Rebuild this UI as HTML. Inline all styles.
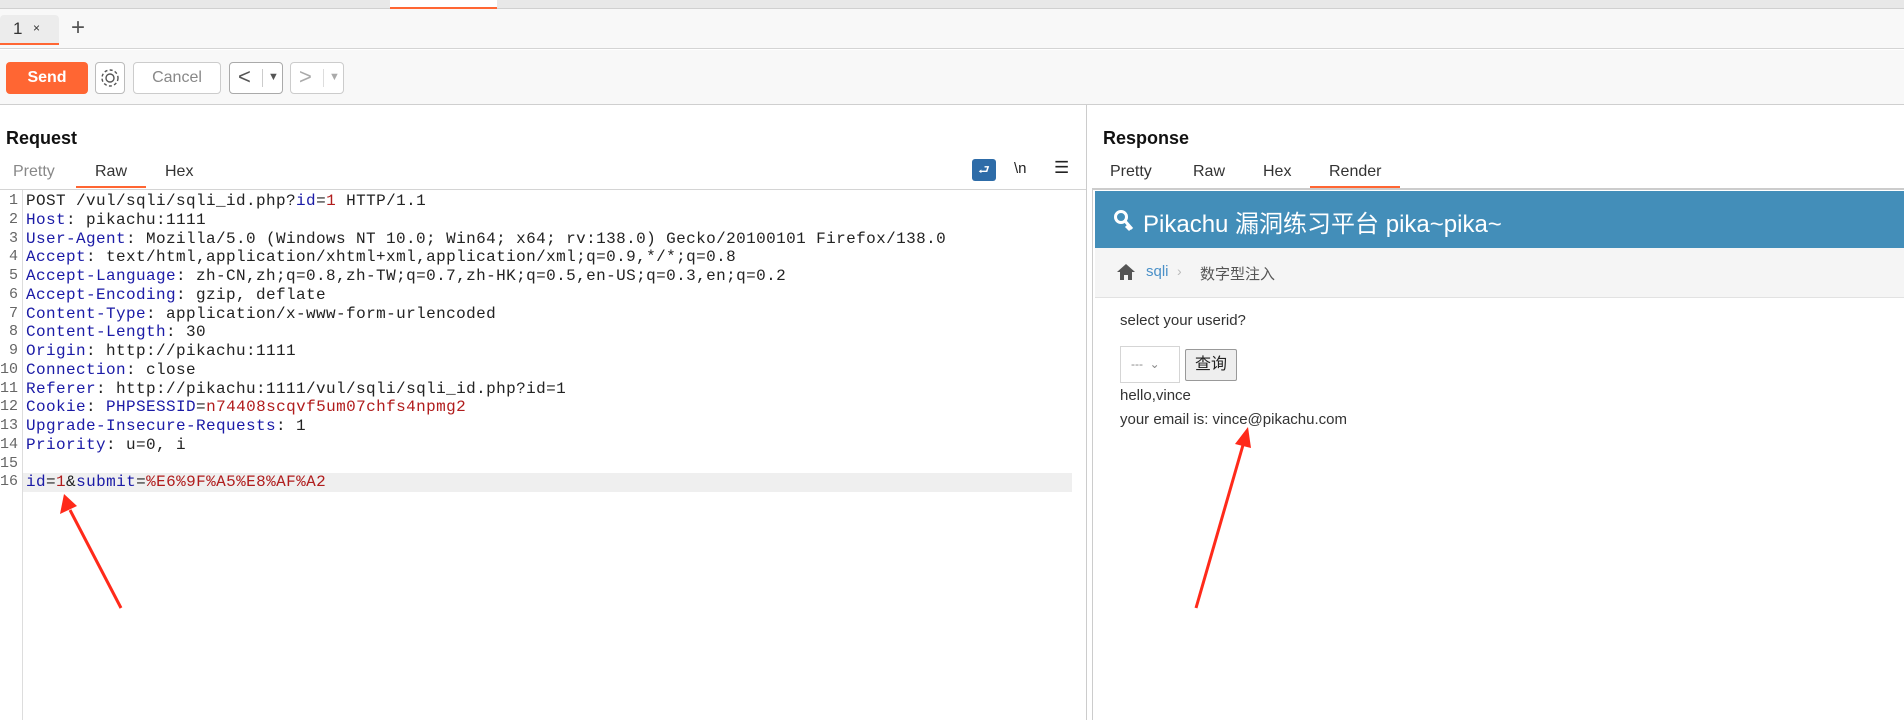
<!DOCTYPE html>
<html><head><meta charset="utf-8"><style>
*{margin:0;padding:0;box-sizing:border-box}
body{width:1904px;height:720px;overflow:hidden;background:#fff;font-family:"Liberation Sans","Noto Sans CJK SC",sans-serif;position:relative;color:#222}
.abs{position:absolute}
.code{font-family:"Liberation Mono","Noto Sans CJK SC",monospace;font-size:16px;letter-spacing:0.4px;white-space:pre;line-height:18.75px;color:#222}
.k{color:#1a1aa6}.v{color:#b01c1c}
.ln{position:absolute;left:0;width:18px;text-align:right;font-family:"Liberation Mono",monospace;font-size:15px;line-height:18.75px;color:#666}
.tab{position:absolute;font-size:16px;color:#333}
</style></head><body>
<div class="abs" style="left:0;top:0;width:1904px;height:9px;background:#e8e8e8;border-bottom:1px solid #d0d0d0"></div>
<div class="abs" style="left:390px;top:0;width:107px;height:9px;background:#fff;border-bottom:2px solid #ff6633"></div>
<div class="abs" style="left:0;top:9px;width:1904px;height:40px;background:#f8f8f8;border-bottom:1px solid #d4d4d4"></div>
<div class="abs" style="left:0;top:15px;width:59px;height:30px;background:#ececec;border-bottom:2px solid #ff6633;border-radius:4px 4px 0 0"></div>
<div class="abs" style="left:13px;top:19px;font-size:17px;color:#333">1</div>
<div class="abs" style="left:33px;top:21px;font-size:12px;color:#333">×</div>
<div class="abs" style="left:71px;top:14px;font-size:24px;color:#555;font-weight:300">+</div>
<div class="abs" style="left:0;top:50px;width:1904px;height:55px;background:#f8f8f8;border-bottom:1px solid #cfcfcf"></div>
<div class="abs" style="left:6px;top:62px;width:82px;height:32px;background:#ff6633;border-radius:4px;color:#fff;font-weight:bold;font-size:16px;text-align:center;line-height:32px">Send</div>
<div class="abs" style="left:95px;top:62px;width:30px;height:32px;border:1px solid #bbb;border-radius:4px;background:#fff">
<svg width="28" height="30" viewBox="0 0 28 30"><circle cx="14" cy="15" r="4" fill="none" stroke="#555" stroke-width="1.4"/><circle cx="14" cy="15" r="8" fill="none" stroke="#555" stroke-width="1.4" stroke-dasharray="3 2.3"/></svg></div>
<div class="abs" style="left:133px;top:62px;width:88px;height:32px;border:1px solid #ccc;border-radius:4px;background:#fff;color:#888;font-size:16px;text-align:center;line-height:30px">Cancel</div>
<div class="abs" style="left:229px;top:62px;width:54px;height:32px;border:1px solid #aaa;border-radius:4px;background:#fff;color:#555;font-size:22px;line-height:28px;padding-left:8px">&lt;<span style="position:absolute;left:32px;top:6px;height:18px;border-left:1px solid #ccc"></span><span style="position:absolute;left:38px;top:0;font-size:11px">▼</span></div>
<div class="abs" style="left:290px;top:62px;width:54px;height:32px;border:1px solid #ccc;border-radius:4px;background:#fff;color:#aaa;font-size:22px;line-height:28px;padding-left:8px">&gt;<span style="position:absolute;left:32px;top:6px;height:18px;border-left:1px solid #ddd"></span><span style="position:absolute;left:38px;top:0;font-size:11px">▼</span></div>
<div class="abs" style="left:6px;top:128px;font-size:18px;font-weight:bold;color:#111">Request</div>
<div class="tab" style="left:13px;top:163px;color:#888">Pretty</div>
<div class="tab" style="left:95px;top:163px">Raw</div>
<div class="abs" style="left:76px;top:186px;width:70px;height:2px;background:#ff6633"></div>
<div class="tab" style="left:165px;top:163px">Hex</div>
<div class="abs" style="left:972px;top:159px;width:24px;height:22px;background:#2e6ca8;border-radius:3px;color:#fff;font-size:13px;text-align:center;line-height:22px">⮐</div>
<div class="abs" style="left:1014px;top:160px;font-size:15px;color:#222">\n</div>
<div class="abs" style="left:1054px;top:158px;font-size:17px;color:#222">☰</div>
<div class="abs" style="left:0;top:189px;width:1086px;height:1px;background:#d4d4d4"></div>
<div class="abs" style="left:22px;top:190px;width:1px;height:530px;background:#ddd"></div>
<div class="abs" style="left:23px;top:473px;width:1049px;height:19px;background:#efefef"></div>
<div class="abs" style="left:0;top:192px;width:1086px">
<div class="ln" style="top:0">1</div><div class="ln" style="top:18.75px">2</div><div class="ln" style="top:37.5px">3</div><div class="ln" style="top:56.25px">4</div><div class="ln" style="top:75px">5</div><div class="ln" style="top:93.75px">6</div><div class="ln" style="top:112.5px">7</div><div class="ln" style="top:131.25px">8</div><div class="ln" style="top:150px">9</div><div class="ln" style="top:168.75px">10</div><div class="ln" style="top:187.5px">11</div><div class="ln" style="top:206.25px">12</div><div class="ln" style="top:225px">13</div><div class="ln" style="top:243.75px">14</div><div class="ln" style="top:262.5px">15</div><div class="ln" style="top:281.25px">16</div>
<div class="code abs" style="left:26px;top:0">POST /vul/sqli/sqli_id.php?<span class="k">id</span>=<span class="v">1</span> HTTP/1.1
<span class="k">Host</span>: pikachu:1111
<span class="k">User-Agent</span>: Mozilla/5.0 (Windows NT 10.0; Win64; x64; rv:138.0) Gecko/20100101 Firefox/138.0
<span class="k">Accept</span>: text/html,application/xhtml+xml,application/xml;q=0.9,*/*;q=0.8
<span class="k">Accept-Language</span>: zh-CN,zh;q=0.8,zh-TW;q=0.7,zh-HK;q=0.5,en-US;q=0.3,en;q=0.2
<span class="k">Accept-Encoding</span>: gzip, deflate
<span class="k">Content-Type</span>: application/x-www-form-urlencoded
<span class="k">Content-Length</span>: 30
<span class="k">Origin</span>: http://pikachu:1111
<span class="k">Connection</span>: close
<span class="k">Referer</span>: http://pikachu:1111/vul/sqli/sqli_id.php?id=1
<span class="k">Cookie</span>: <span class="k">PHPSESSID</span>=<span class="v">n74408scqvf5um07chfs4npmg2</span>
<span class="k">Upgrade-Insecure-Requests</span>: 1
<span class="k">Priority</span>: u=0, i

<span class="k">id</span>=<span class="v">1</span>&amp;<span class="k">submit</span>=<span class="v">%E6%9F%A5%E8%AF%A2</span></div>
</div>
<div class="abs" style="left:1086px;top:105px;width:1px;height:615px;background:#ccc"></div>
<div class="abs" style="left:1092px;top:189px;width:1px;height:531px;background:#ccc"></div>
<div class="abs" style="left:1103px;top:128px;font-size:18px;font-weight:bold;color:#111">Response</div>
<div class="tab" style="left:1110px;top:163px">Pretty</div>
<div class="tab" style="left:1193px;top:163px">Raw</div>
<div class="tab" style="left:1263px;top:163px">Hex</div>
<div class="tab" style="left:1329px;top:163px">Render</div>
<div class="abs" style="left:1310px;top:186px;width:90px;height:2px;background:#ff6633"></div>
<div class="abs" style="left:1092px;top:188px;width:812px;height:2px;background:#ccc"></div>
<div class="abs" style="left:1095px;top:191px;width:809px;height:57px;background:#438eb9"></div>
<div class="abs" style="left:1113px;top:206px;width:24px;height:30px"><svg width="22" height="28" viewBox="0 0 22 28"><circle cx="8" cy="11" r="5.5" fill="none" stroke="#fff" stroke-width="3"/><path d="M12 15l7 8M15 20l-2 2M17 22l-2 2" stroke="#fff" stroke-width="3"/></svg></div>
<div class="abs" style="left:1143px;top:204px;font-size:24px;color:#fff">Pikachu 漏洞练习平台 pika~pika~</div>
<div class="abs" style="left:1095px;top:248px;width:809px;height:50px;background:#f5f5f5;border-bottom:1px solid #e2e2e2"></div>
<div class="abs" style="left:1116px;top:262px"><svg width="20" height="20" viewBox="0 0 20 20"><path d="M10 2L1 10h3v8h4v-5h4v5h4v-8h3z" fill="#555"/></svg></div>
<div class="abs" style="left:1146px;top:263px;font-size:15px;color:#4a90c8">sqli</div>
<div class="abs" style="left:1177px;top:263px;font-size:14px;color:#bbb">›</div>
<div class="abs" style="left:1200px;top:263px;font-size:15px;color:#555">数字型注入</div>
<div class="abs" style="left:1120px;top:312px;font-size:15px;color:#333">select your userid?</div>
<div class="abs" style="left:1120px;top:346px;width:60px;height:37px;border:1px solid #d5d5d5;background:#fff;font-size:12px;color:#888;padding:10px 0 0 10px">---&nbsp;&nbsp;⌄</div>
<div class="abs" style="left:1185px;top:349px;width:52px;height:32px;border:1px solid #999;border-radius:2px;background:#eee;font-size:16px;text-align:center;line-height:30px;color:#222">查询</div>
<div class="abs" style="left:1120px;top:387px;font-size:15px;color:#333">hello,vince</div>
<div class="abs" style="left:1120px;top:411px;font-size:15px;color:#333">your email is: vince@pikachu.com</div>
<svg class="abs" style="left:0;top:0" width="1904" height="720">
<path d="M121 608 L70 510" stroke="#ff2a1a" stroke-width="3"/>
<path d="M64 494 L60 514 L77 506 Z" fill="#ff2a1a"/>
<path d="M1196 608 L1243 445" stroke="#ff2a1a" stroke-width="3"/>
<path d="M1248 427 L1235 444 L1251 448 Z" fill="#ff2a1a"/>
</svg>
</body></html>
